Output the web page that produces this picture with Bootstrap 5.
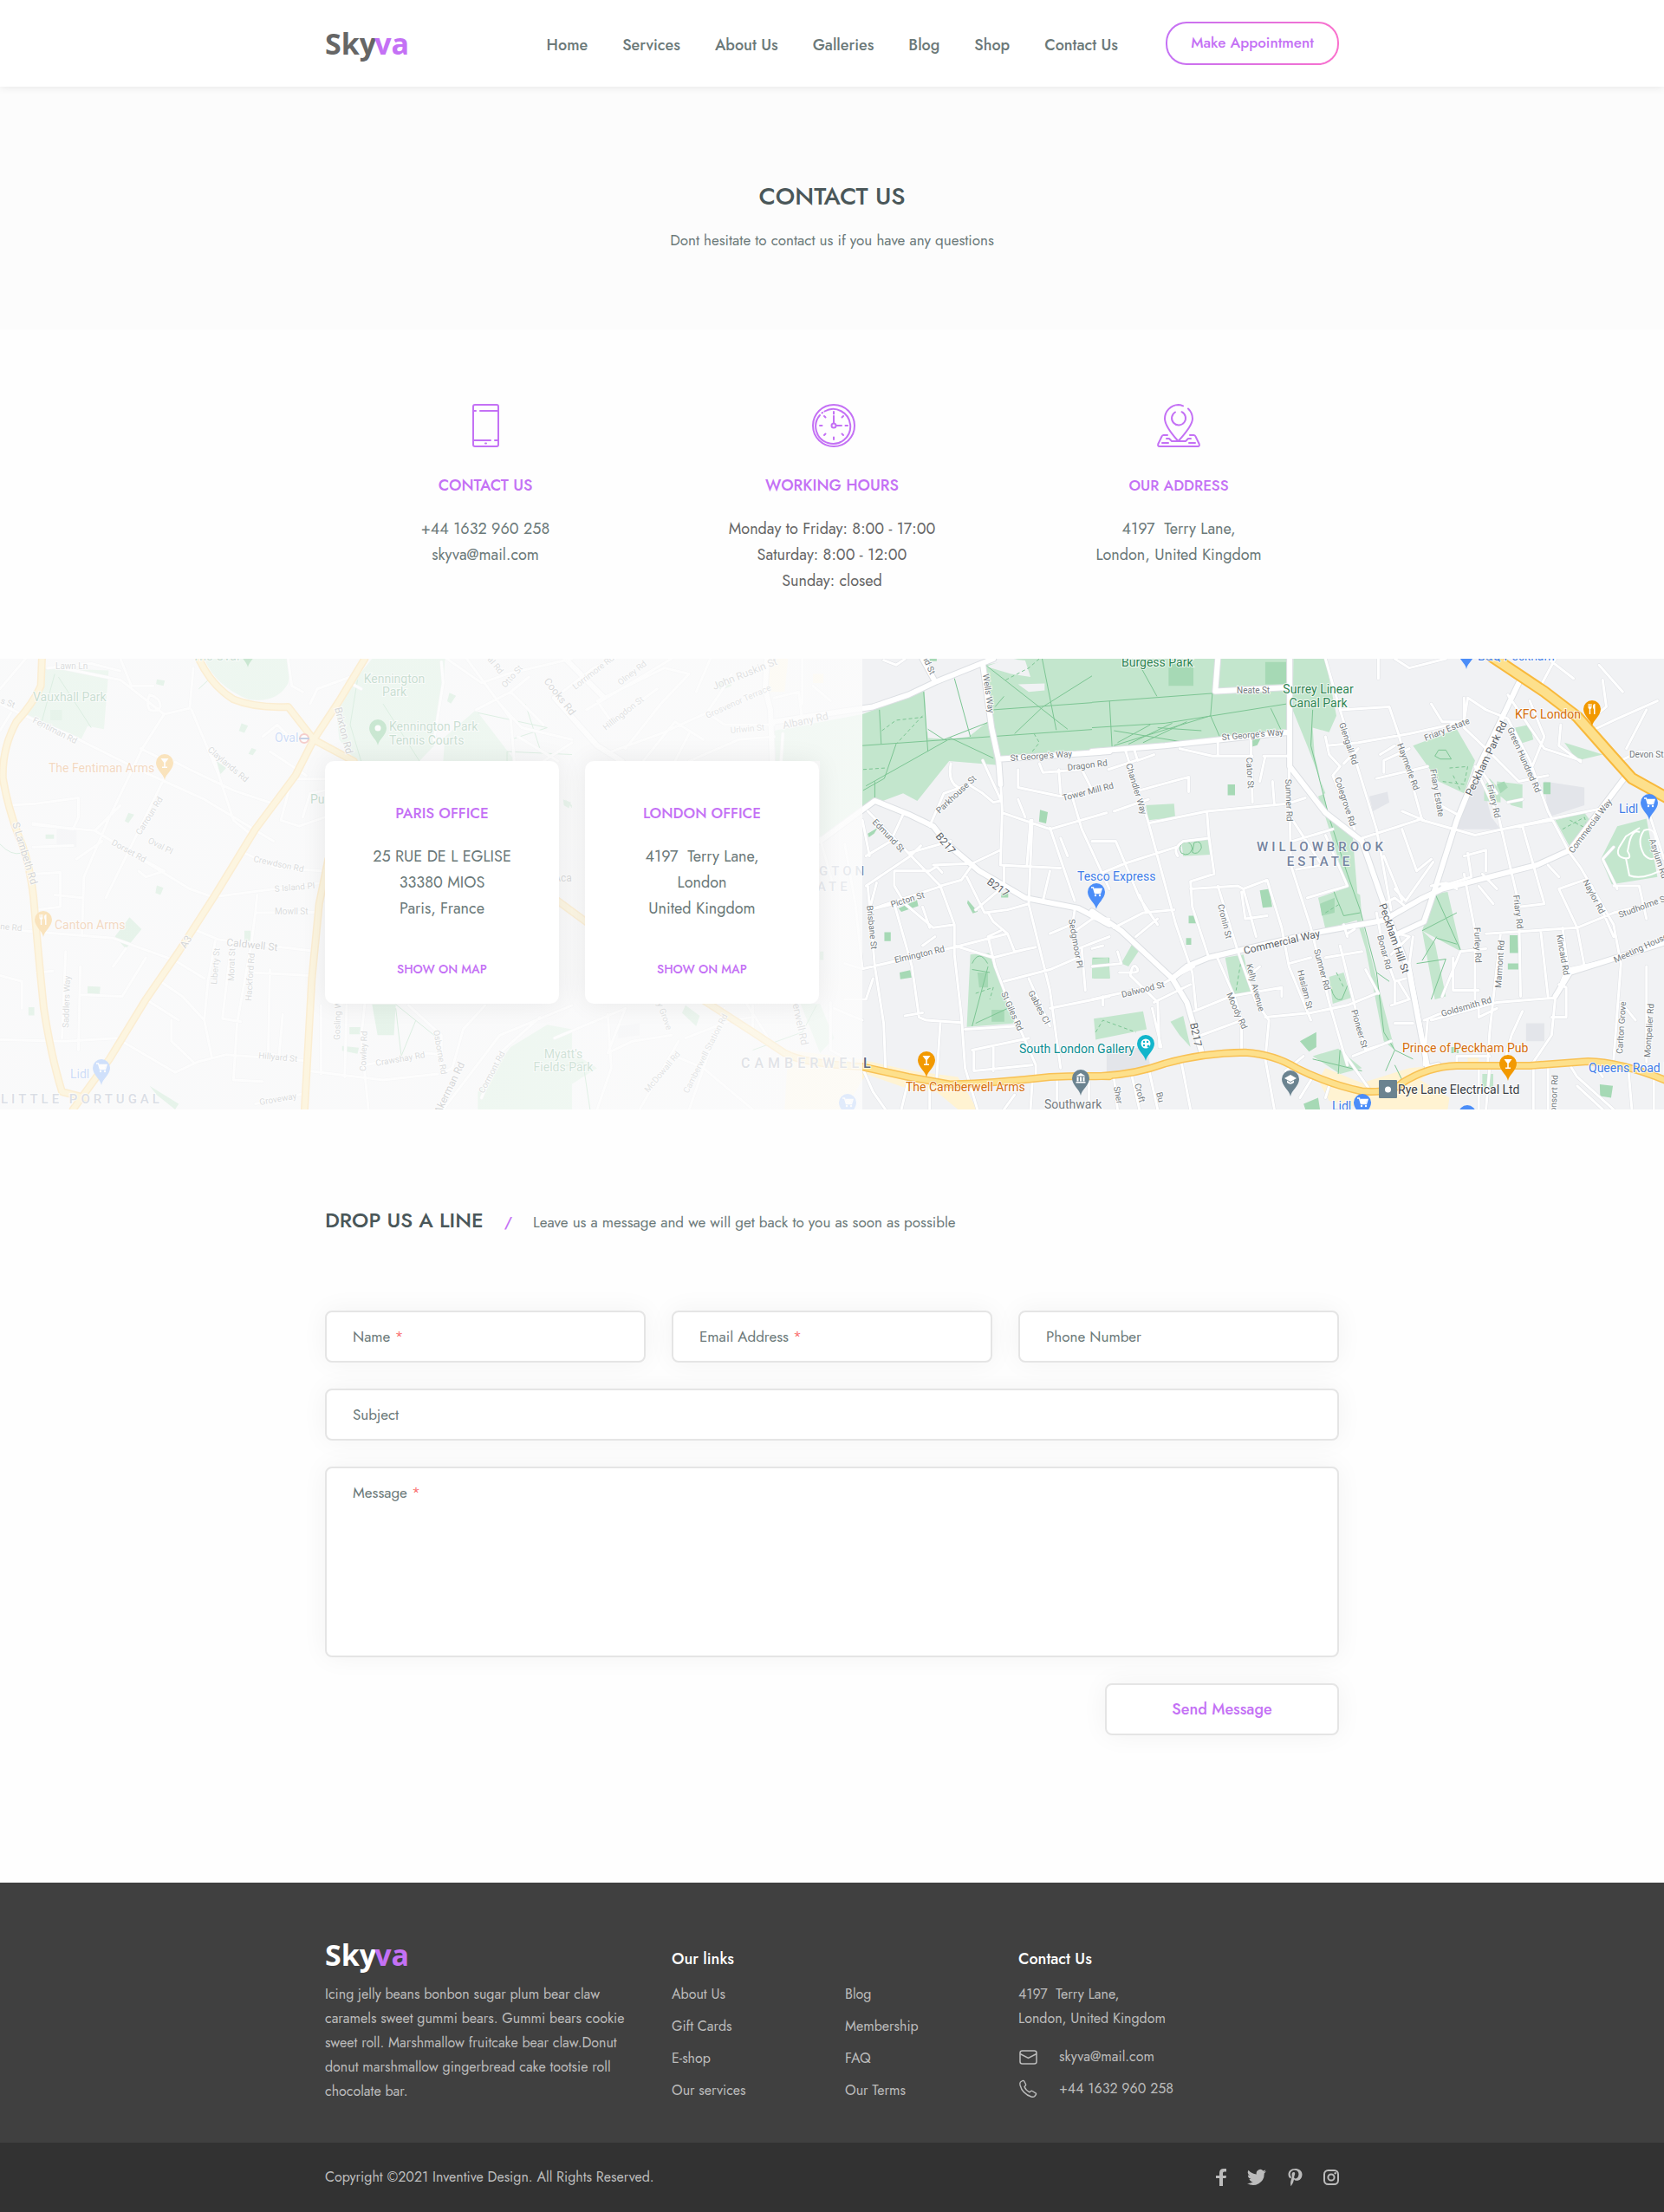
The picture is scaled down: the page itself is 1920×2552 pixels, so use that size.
<!DOCTYPE html>
<html lang="en">
<head>
<meta charset="utf-8">
<meta name="viewport" content="width=device-width, initial-scale=1">
<title>Skyva – Contact Us</title>
<link href="https://cdn.jsdelivr.net/npm/bootstrap@5.3.0/dist/css/bootstrap.min.css" rel="stylesheet">
<style>
:root{--ink:#4a5759;--soft:#6b7979;--violet:#c471f5;--pink:#fa71cd}
body{font-family:Jost,Lato,"Open Sans",sans-serif;font-size:17px;line-height:30px;color:var(--soft);background:#fefefe}
a{text-decoration:none}
.page-wrap{max-width:1200px;padding-left:15px;padding-right:15px}
.row{--bs-gutter-x:30px}
.site-head{min-height:100px;box-shadow:0 0 10px rgba(0,0,0,.1);position:relative;z-index:2}
.brand{font:700 34px/40px "Open Sans","Noto Sans",sans-serif;color:#666}
.brand span{color:var(--violet);margin-left:-2px}
.menu{gap:40px}
.menu .nav-link{color:var(--soft);font-size:18px;font-weight:500;line-height:24px;padding:4px 0 0}
.btn-appoint{width:200px;height:50px;margin-left:55px;border:2px solid transparent;border-radius:24px;color:var(--violet);font-size:17px;font-weight:500;background:linear-gradient(#fff,#fff) padding-box,linear-gradient(90deg,var(--violet),var(--pink)) border-box}
.btn-appoint:hover{color:var(--pink)}
.hero{background:#fcfcfc;padding:110px 0 88px}
.hero h1{font-size:28px;line-height:34px;font-weight:500;color:var(--ink);margin-bottom:18px}
.info{padding:86px 0 75px}
.info svg{display:block;margin:0 auto 29px}
.cap{color:var(--violet);font-size:18px;line-height:30px;font-weight:500;margin-bottom:20px}
.cap-sm{font-size:17px}
.facts{font-size:18px;line-height:30px;color:var(--soft)}
.facts a{color:inherit}
.hours{color:#666}
.map-zone{position:relative;padding:118px 0 122px;overflow:hidden;background:#f1f2f4}
.map-art{position:absolute;left:0;top:0;width:100%;height:100%}
.map-veil{position:absolute;left:0;top:0;bottom:0;width:51.8%;background:linear-gradient(90deg,rgba(252,252,252,.75) 50%,rgba(252,252,252,.85))}
.office{min-height:280px;padding:45px 15px 25px;border:0;border-radius:10px;background:#fff;box-shadow:0 0 30px rgba(0,0,0,.07);text-align:center}
.office .btn-map{color:var(--violet);font-size:14px;font-weight:500;line-height:30px;margin-top:auto}
.write{padding:110px 0 170px}
.write h2{font-size:24px;line-height:36px;font-weight:500;color:var(--ink);margin:0}
.write-head{margin-bottom:86px}
.slash{color:var(--violet);font-weight:500}
.field{position:relative}
.field label{position:absolute;left:32px;top:16px;pointer-events:none;line-height:28px}
.field label b{color:#fa7070;font-weight:400}
.field .form-control:not(:placeholder-shown)+label{display:none}
.field .form-control,.btn-send{min-height:60px;border:2px solid #e5e5e5;border-radius:8px;background:#fff;box-shadow:0 0 30px rgba(0,0,0,.05);padding:14px 30px;font-size:17px}
.field textarea.form-control{height:220px;resize:none}
.btn-send{color:var(--violet);width:270px;font-size:18px;font-weight:500}
.foot{background:#404040;color:#bcbcbc;padding:62px 0 37px;font-size:16px;line-height:28px}
.foot a{color:inherit}
.foot a.brand{color:#fff;line-height:42px;display:block;margin-bottom:11px}
.foot h3{font-size:18px;line-height:28px;font-weight:500;color:#fff;margin:12px 0 13px}
.foot li{margin-bottom:9px}
.foot-bar{background:#323232;color:#bcbcbc;padding:26px 0;font-size:16px;line-height:28px}
.foot-bar svg{display:block;fill:#bcbcbc}
/* map drawing */
.tile path,.tile rect{vector-effect:non-scaling-stroke}
.ways{fill:none;stroke-linejoin:round;stroke-linecap:round}
.park{fill:#c3e6cd}.lawn{fill:#a6d9b5}.block{fill:#e3e5ea}.shop{fill:#fff3d2}
.trail{fill:none;stroke:#7cc593;stroke-width:1}
.dash{stroke-dasharray:4 3}
.lbl text{font-family:Roboto,sans-serif;font-size:10px;fill:#757b80;paint-order:stroke;stroke:rgba(255,255,255,.75);stroke-width:2px}
.lbl .poi{font-size:14px}
.lbl .main{font-size:12px;fill:#5d6368}
.green{fill:#2f8552!important}.orange{fill:#d56e0c!important}.blue{fill:#3f7de8!important}.teal{fill:#0c8f93!important}.dark{fill:#3a3f44!important}
.lbl .area{font-size:15px;font-weight:500;letter-spacing:4px;fill:#7584a0}
.lbl .town{font-size:16px;letter-spacing:5px;fill:#5b6880}
</style>
<script src="https://cdn.jsdelivr.net/npm/bootstrap@5.3.0/dist/js/bootstrap.bundle.min.js"></script>
</head>
<body>
<header class="site-head bg-white d-flex align-items-center">
  <div class="container-fluid page-wrap d-flex flex-wrap align-items-center">
    <a class="brand" href="#">Sky<span>va</span></a>
    <nav class="nav menu ms-auto" aria-label="Main">
      <a class="nav-link" href="#">Home</a><a class="nav-link" href="#">Services</a><a class="nav-link" href="#">About Us</a><a class="nav-link" href="#">Galleries</a><a class="nav-link" href="#">Blog</a><a class="nav-link" href="#">Shop</a><a class="nav-link" href="#">Contact Us</a>
    </nav>
    <button type="button" class="btn btn-appoint">Make Appointment</button>
  </div>
</header>

<main>
<section class="hero text-center">
  <h1>CONTACT US</h1>
  <p class="m-0">Dont hesitate to contact us if you have any questions</p>
</section>

<section class="info">
  <div class="container-fluid page-wrap">
    <div class="row text-center">
      <div class="col-md-4">
        <svg width="50" height="50" viewBox="0 0 50 50" fill="none" stroke="#c471f5" stroke-width="2" stroke-linecap="round" aria-hidden="true"><rect x="11" y="1" width="29" height="48" rx="2"/><path d="M12 8h2M19 8h20M12 42h19M36 42h3"/><path d="M25 45.500h1"/></svg>
        <h2 class="cap">CONTACT US</h2>
        <div class="facts"><a href="#">+44 1632 960 258</a><br><a href="#">skyva@mail.com</a></div>
      </div>
      <div class="col-md-4">
        <svg width="54" height="50" viewBox="-2 0 54 50" fill="none" stroke="#c471f5" stroke-width="2" stroke-linecap="round" aria-hidden="true"><g transform="translate(2 0)"><circle cx="25" cy="25" r="24"/><path d="M14.500 8.500A20 20 0 1 1 9 13M11.500 10.500l.5-.5"/><circle cx="25" cy="25" r="2.500"/><path d="M25 22V14M28 25h6M25 9v2.500M25 38.500V41M9 25h2.500M38.500 25H41M14 14l1.500 1.500M36 14l-1.500 1.500M14 36l1.500-1.500M36 36l-1.500-1.500"/></g></svg>
        <h2 class="cap">WORKING HOURS</h2>
        <div class="facts hours">Monday to Friday: 8:00 - 17:00<br>Saturday: 8:00 - 12:00<br>Sunday: closed</div>
      </div>
      <div class="col-md-4">
        <svg width="50" height="50" viewBox="0 0 50 50" fill="none" stroke="#c471f5" stroke-width="2" stroke-linecap="round" stroke-linejoin="round" aria-hidden="true"><path d="M30 2.300Q27 1 24.500 1A16 16 0 0 0 9 17C9 25 20 38 24.500 43 30 37 41 25 41 17A16 16 0 0 0 36 5.500"/><path d="M28.500 9.200A8 8 0 1 1 21 9.500"/><path d="M12 36H7.500Q6 36 5.300 38L1.400 46Q.5 49 3 49H47Q49.500 49 48.600 46L44.700 38Q44 36 42.500 36H38M11 40h3l3 3M6 45h7M39 40h-3l-3 3M44 45h-7M18 43h14"/></svg>
        <h2 class="cap cap-sm">OUR ADDRESS</h2>
        <div class="facts">4197 &nbsp;Terry Lane,<br>London, United Kingdom</div>
      </div>
    </div>
  </div>
</section>

<section class="map-zone">
<svg class="map-art" viewBox="0 0 1920 520" preserveAspectRatio="xMidYMid slice" role="img" aria-label="Street map of south London">
<defs>
<path id="pin" d="M0 0C-1-7-10-12-10-20A10 10 0 1 1 10-20C10-12 1-7 0 0Z"/>
<g id="cart"><path d="M-6-25h2.500l2 6.500h6l1.500-5h-8" fill="none" stroke="#fff" stroke-width="1.500"/><path d="M-3-23.500h8.500l-1.500 4.500h-6z" fill="#fff"/><circle cx="-1" cy="-16" r="1.200" fill="#fff"/><circle cx="4" cy="-16" r="1.200" fill="#fff"/></g>
<path id="glass" d="M-4.500-25h9L.8-20v4.500h2.200v1.500h-6v-1.500h2.200V-20z" fill="#fff"/>
<path id="fork" d="M-4.500-26v4q0 1.500 1.300 2v6h1.400v-6q1.300-.5 1.300-2v-4h-1v3.500h-.6V-26h-.8v3.500h-.6V-26zM2-14v-5.500q-1-1-1-3.500 0-3 2.500-3v12z" fill="#fff"/>
<g id="lanes">
 <g class="tile" transform="matrix(.4209 0 0 .3444 0 -10)">
  <path d="M0 180L60 215L200 290L380 400L560 500L750 640M150 55L330 100L450 215L520 195L530 60M130 60L250 45L330 70M525 200L600 420L640 570L690 620M600 420L580 330M450 215L390 330L300 560L230 760L225 950M385 330L470 380L290 830M480 375L520 400L640 470L750 515M810 432H890M750 515L700 600M30 520L95 515L215 495V560L200 600L90 580M90 585L260 605L360 680L520 800L590 830M260 605L330 520M280 640L210 700M360 680L450 740L400 760L380 740M150 820L225 830M90 660L200 655M95 750L165 745V860L100 870M60 940L310 965L480 1040L560 1100M345 1000L310 1060M540 940L600 970L870 1010M670 680L760 730L880 740M595 825L880 780M705 820L700 880L860 878M700 880L690 975M590 975L570 1110L560 1240L580 1360M635 975L610 1230M690 975L650 1250L640 1440L720 1445M610 1235L660 1245M560 1240L500 1160L440 1110M400 1170L490 1240M100 1080L145 1075M180 1010L170 1300M220 1060L215 1340M220 1155L335 1160L400 1030M0 1305L180 1310L320 1300L480 1415L540 1380L620 1355L830 1375M470 1240V1310L530 1380M740 1070L735 1350L765 1360L775 1220M850 1090L690 1080M845 1410L1050 1440L1200 1420M880 1190V1420M950 1190L945 1430M1000 1185L990 1300L1010 1539M1120 1190L1210 1290V1420L1240 1400L1270 1270L1330 1190M1000 1390L1170 1350L1210 1355M0 1090L60 1110V1200M700 1520L835 1485M1215 1539L1370 1290L1568 1190M1320 1500L1370 1350L1480 1230M1210 40L1215 110L1190 300M1225 29L1320 110L1390 80L1568 29M1305 200L1400 140L1450 90M1400 140L1490 250M1370 180L1430 260L1568 300M1280 30L1400 230L1410 372M1420 290L1530 372M1490 372L1568 310M960 110L990 130M850 180L870 130L960 90M790 29L800 120L830 140M720 290L760 250L800 300M740 340L840 420M800 432L770 570L820 590L890 560M830 560L850 480L890 470M410 150Q400 180 410 200 430 210 440 190 440 160 410 150M330 29L360 120H420M0 130L70 29M0 270L30 210"/>
 </g>
 <g class="tile" transform="matrix(.4082 0 0 .3444 640 -10)">
  <path d="M0 160L110 60L170 29M120 170L310 60L380 80L300 180L220 300L200 330M120 170L160 240L290 130M90 200L330 29M160 340L300 280L430 210L470 140L500 80M400 140L440 29M380 372L520 300L620 290M430 210L480 250L620 250M340 372L380 280M620 160L690 140L700 240M730 120L780 170M640 372L645 280M700 29V180M250 372L340 240L420 300M885 540L1000 680L1090 790L1130 920V1020L1150 1230L1160 1400L1195 1539M1005 690L880 790M985 550L950 640L880 690M1035 655L1005 690M1000 680L1120 640M870 570L890 690M1180 715L1260 670M1090 790L1150 770L1180 720M890 870L1095 790M885 790L905 1060L930 1250L935 1400M910 780L890 870L960 850L1010 1060L1030 1230L1050 1240L1150 1248M870 1068L1130 995L1280 950M1060 740L960 740V790L990 850L1070 930L1130 920M1060 740L1080 725L1095 745M1165 760L1215 880L1280 870L1340 850M1225 880L1240 910L1280 950L1300 1010L1360 995M1260 940L1225 960L1245 1060L1290 1200L1360 1390L1360 1430M1130 990L1240 1030L1340 1000M1270 1110L1400 1070L1480 1030M1260 430L1265 540L1260 720L1340 725L1430 730M1350 570L1340 850L1350 900L1400 1140L1430 1400M1345 570L1335 720M1265 545L1400 600L1560 545M1400 595L1470 840M1370 380L1380 410L1490 400L1520 470M1310 400V460L1430 490L1460 480L1490 600L1568 800M1425 400L1430 480M1270 720V790L1190 870M1400 740L1380 840M1180 715L1070 720M1400 1200L1568 1160M1340 1100L1400 1260M1090 1250L1080 1430M1160 1270L1300 1260M1180 1340L1340 1300M1185 1340V1410L1350 1390M1240 1330V1410M1210 370L1260 500M1120 380Q1110 440 1140 460M1060 590L1100 480L1170 450L1210 480L1240 510L1260 505M1310 500L1330 560M1430 630L1450 690M1470 870L1460 950L1520 900H1568M1400 950L1460 920M1490 1000L1500 1140M1480 1000L1568 960M990 1225L1040 1215M900 1100L880 1170H820M820 1050L870 1068M790 1200L870 1240M820 650L850 850L870 1068M750 630L790 800M200 1200L150 1350L220 1310L330 1290M150 1220L160 1400L120 1539M0 1300L200 1200M560 1190V1280M480 1200L380 1539M370 1300L500 1240L560 1230M350 1310L240 1539M340 1360L420 1400L560 1539M540 1180L620 1330L700 1370M870 1400L900 1480L935 1539M1000 1440L980 1539M1060 1460V1539M1300 1490L1270 1539M1350 1450L1345 1539M1040 860L1060 930M1040 990L1075 960M1420 1430V1539M1510 1430V1539M930 34L965 50 990 30M780 1180V1340L860 1390"/>
 </g>
 <g class="tile" transform="matrix(.4209 0 0 .3444 1260 -10)">
  <path d="M90 330L155 580L230 920L275 1080L285 1200M115 330L125 370L170 350M45 400L120 370M130 470L265 425V475M60 540L155 500M155 580L315 540L535 515L585 495M315 540L320 620L335 750L270 775L275 860L320 1030M230 660L90 715L0 760M235 690Q220 665 250 640L320 630M0 640L65 640L130 830L180 920M240 330L330 355H440M345 300V350M435 300L440 510M475 355L460 440M470 355H540M495 440L500 520M540 395L545 720L600 930L650 1180L700 1390M545 560L630 720L560 735M640 620L700 790L590 830M550 640L660 600M640 29L680 200L780 600L820 870M680 200L815 190L840 280L905 570L1050 620L1240 570L1400 530M740 630L905 565M645 320L730 310L870 280L1020 240M640 290L650 350L680 390L660 420L720 600M690 380L730 330M790 350L830 320M780 430L920 390M800 410V370L870 330M850 540L910 570M940 510L1000 550M830 29L870 60L970 29M785 29V95M930 180L960 240L1020 240L1030 160L1080 200L1140 230L1200 370L1250 540L1310 680L1340 730L1430 920L1450 1050L1430 1370M1020 160V260L1080 330L1170 440L1250 420M1140 150L1240 330L1340 370M1200 170L1240 290L1200 410M1230 120L1270 29M1285 250L1280 320L1340 375M1400 100L1410 190L1350 250M1390 50L1455 140M1370 270L1440 230L1550 170M1465 330L1520 200M1250 29L1320 95M1450 370L1500 340L1568 350M1050 390L1115 560L1170 850L1175 1160M1060 390L1110 480M1180 590L1240 850L1170 860M1125 600L1260 570M1140 510L1180 500M850 600L890 740L930 700M935 710L860 840L830 800M800 690L850 840M1020 750L1050 940V1180M1030 680L1040 760L960 790M1020 690L1080 670V740M1070 750L1110 800M1060 790L1100 850M1080 950L1330 930L1430 880L1568 840M1120 950L1090 1280L1085 1380M930 1240L1110 1180L1270 1165L1300 1070L1450 1030M1270 1165L1260 1290L1210 1380M1230 940L1250 1160M1330 930L1350 1060M1290 930L1305 1070M910 1240L950 1220L1080 1180M1110 1200L1060 1230V1180M960 1160L1010 1010L1080 1000M990 1030V1140H1060M910 1390L920 1240M880 960L870 1050L900 1250L920 1400M1180 1210L1150 1290L1130 1380M1280 800L1350 770L1370 790L1430 960M1280 800L1330 930M1250 720L1280 760M1430 790L1500 790L1520 900M1430 660L1400 700L1440 800M1520 520L1568 700M1520 1060V1380M1450 1180L1490 1240M1280 1120L1300 1130V1230H1260M270 800L400 790L415 800L480 770L520 930L540 1060L600 1240M410 810L420 900L480 890M345 790L400 1010L450 1180L485 1240L475 1370M415 800L450 960M340 1020L390 1160L410 1240V1340M280 1210L380 1160L520 1130V1160M300 1290L410 1240M475 1230L600 1215L700 1190L780 1150M460 1060L430 1090M540 1050L600 1030M640 1030L740 1010M680 990L750 1340L800 1320M750 1070L785 1150M780 880L800 1010L830 1110L860 1100M830 1110V1180M715 1360L820 1310M690 1350L760 1470M690 920L700 960M700 950L720 935M0 1170L190 1120L280 1060M170 1180L270 1120M30 1160V1190M0 1060L80 1050L70 1010M75 1080H110Q135 1080 120 1060 110 1050 105 1090L180 1180L185 1330M165 1200L190 1330M150 880L130 820M60 930L140 880L225 870M180 900L120 960M0 1000L30 990M245 1380L270 1539M155 1400L180 1539M110 1430L130 1539M60 1430L70 1539M475 1370L500 1539M530 1410L580 1360M600 1440L570 1500M650 1460L640 1500M1000 1390V1360H1090M1060 1400V1539M1090 1400L1080 1539M1210 1400V1539M1250 1400V1539M1310 1390L1330 1430L1430 1539M1380 1390L1400 1430M1330 1460L1400 1539M1470 1400L1480 1539M1540 1430V1539M830 1250H880M820 1020L870 960L840 950M930 790L970 780L1000 800M800 850L830 830L860 860M820 1190L870 1170L840 1110"/>
 </g>
</g>
<g id="avenues">
 <g class="tile" transform="matrix(.4082 0 0 .3444 640 -10)">
  <path d="M600 29L595 130L610 200L615 372M620 240L760 215L900 190L1000 150L1080 105L1240 29M1040 29L1075 105M1210 45L1235 260L1255 370L1260 450M1255 365L1568 340M750 640L830 570L905 505L1000 550L1070 590L1110 650L1200 740L1330 830L1480 865L1568 920M0 160L120 320L190 372M30 29L140 160"/>
 </g>
 <g class="tile" transform="matrix(.4209 0 0 .3444 1260 -10)">
  <path d="M0 340L200 320L540 275M345 29L338 138L540 125M542 29V390L640 545L740 640L800 850L870 1080L920 1400L950 1390M0 875L80 940L220 1100L260 1180L300 1345M220 1100L260 1060L320 1030L600 950L800 905L900 835L960 800L1220 720L1310 670L1465 420M1170 110L1060 390L1000 570L935 820L910 910L840 950M1270 1160L1310 1080L1568 980"/>
 </g>
</g>
<g id="highways">
 <g class="tile" transform="matrix(.4209 0 0 .3444 0 -10)">
  <path d="M115 29L112 120Q90 180 45 240 5 330 8 430 20 520 50 620 80 700 92 830 105 1020 120 1200 140 1360 170 1480L235 1500"/>
  <path d="M1000 29L930 170L860 300L810 420L700 600L590 820L490 1010L400 1170L300 1370L200 1539"/>
  <path d="M545 29Q580 120 640 165 700 195 790 190L860 300L970 372M900 700L875 850L855 1100L835 1539"/>
 </g>
 <g class="tile" transform="matrix(.4082 0 0 .3444 640 -10)">
  <path d="M-60 780L100 920L430 1180L560 1280L650 1350Q700 1385 870 1396L1000 1430L1120 1455Q1250 1450 1400 1430 1480 1425 1568 1428"/>
 </g>
 <g class="tile" transform="matrix(.4209 0 0 .3444 1260 -10)">
  <path d="M-20 1428Q100 1430 200 1385 300 1350 420 1348 500 1355 560 1400 650 1455 740 1478 820 1485 850 1450 920 1395 1000 1392L1200 1392L1360 1378Q1450 1380 1580 1445"/>
 </g>
</g>
<path id="trunk" d="M1716-6L1782 38L1820 67L1858 110L1883 138L1930 164"/>
</defs>
<rect width="1920" height="520" fill="#f1f2f4"/>
<g class="tile" transform="matrix(.4209 0 0 .3444 0 -10)">
 <path class="park" d="M125 60L298 68L285 265L240 255L220 305L65 210L100 150ZM560 29Q590 120 680 165 760 180 790 110 800 60 790 29ZM1020 29H1220L1215 120 1190 320 1150 372H975L930 300 920 180ZM1305 200L1405 360V372H1215L1220 290ZM1568 1270L1500 1255 1400 1330 1310 1480V1539H1568Z"/>
 <path class="lawn" d="M430 98l22 4-4 18-20-6zM662 245l18 8-10 24-15-6zM690 328l13 6-10 18-12-4zM352 545l16 6-16 28-10-6zM125 618h23v14h-23zM430 788l18 8-8 24-14-6zM670 940h17v35h-17zM240 1126l35 2-2 26-33-4zM78 1196h16v28h-16zM958 1263h30v24h-30zM1232 143l18 10-14 26-10-8zM315 960L355 895 388 935 345 1000ZM580 360L620 395 605 415ZM1020 1187H1085L1080 1290H1035ZM410 1460L490 1520 480 1539 430 1490ZM938 1326l46 6-4 20-42-10zM138 200h32v35h-32zM1550 500l18 20v10z"/>
 <path class="block" d="M155 600H210V660H155Z"/>
 <path class="trail" d="M0 650Q30 690 60 680M1085 1187L1200 1300M1085 1200L1100 1360 1140 1240M1310 210L1500 260 1400 300M1440 180L1480 330M545 130L580 90M1390 372V340L1568 350M150 80L110 260M160 90L250 260M980 100L960 250 990 372M1050 180L1150 372"/>
</g>
<g class="tile" transform="matrix(.4082 0 0 .3444 640 -10)">
 <path class="shop" d="M600 29H660L650 140H600ZM730 80H760V110H730ZM660 1340L860 1370 1010 1410 1140 1430 1195 1539H1140L1080 1480 1000 1470 880 1420 820 1539H650Z"/>
 <path class="park" d="M620 270L870 215 1045 135 1055 295 1110 298 1170 290 1228 235 1218 50 1310 29H1568V335L1250 370 1248 385 1115 372 1025 505 985 480 905 515 800 600 750 640V372H625ZM1175 1020L1228 1015 1300 1250 1165 1262ZM695 1185H750L790 1300 750 1350ZM0 1310L120 1400 0 1490ZM1530 1240L1568 1230V1290L1530 1300Z"/>
 <path fill="#f1f2f4" d="M1220 55L1280 29 1330 35 1345 90 1290 80ZM1310 115L1385 112V135L1340 140ZM1130 95L1228 235 1170 290 1070 295 1050 270 1048 140Z"/>
 <path class="lawn" d="M1372 535l22 8-5 38-20-6zM455 110l40-20 5 30-30 15zM885 615l28-20-10 20-15 12zM972 865l52-28 4 20-48 20zM1168 838l28 38-14 6-16-34zM932 945h18v30h-18zM975 1080l30-8 4 25-32 6zM1520 1030h48v70h-45zM1195 1080h30v50h-25zM1235 1205h36v40h-36zM370 1190L410 1225 400 1260 360 1215ZM24 500L46 510 40 530 26 520ZM1262 815l20-4v18h-20zM1060 29h20v8h-20zM750 1010h10v28h-10z"/>
 <path class="block" d="M175 1260L240 1250V1290L180 1300Z"/>
 <path class="trail" d="M870 320L1568 262M918 200L923 315M1043 140L1055 340M965 315L932 430 872 470M1130 95L1175 290M1055 265L1100 300 1230 240M1120 295L880 455M1120 295L1240 362M1218 50L1450 265M1568 50L1380 190 1300 280M1240 200L1568 172M1378 29L1418 268M1270 155L1245 190M905 440V515M1180 1260L1225 1060M1180 1050Q1200 1000 1224 1050M1180 1070L1230 1080M1190 1250L1290 1195M740 1190L700 1280 560 1340M0 1400L80 1380 100 1539"/>
 <path class="trail dash" d="M925 270L965 235 1040 225M1040 220L965 315M872 400L935 395M1275 100L1340 60 1370 29M1355 280L1370 310 1350 340M1190 1150L1240 1130 1230 1170"/>
</g>
<g class="tile" transform="matrix(.4209 0 0 .3444 1260 -10)">
 <path class="shop" d="M640 1400L740 1450 870 1400 960 1390 900 1440 980 1500 975 1539H760L650 1510 620 1440ZM1030 1365H1060V1400H1030Z"/>
 <path class="block" d="M760 490L810 475 815 510 770 540ZM1060 400L1095 560 1120 600 1000 600ZM1240 440L1350 460V520L1250 560ZM40 1340L150 1330 160 1395 40 1420ZM1190 1250H1240V1310H1190Z"/>
 <path class="park" d="M0 29H345L338 140 542 130V272L0 335ZM345 29H542V125L340 135ZM552 29H640L670 220 650 275 605 260 610 350 650 560 715 630 730 850 745 930 790 1150 830 1340 800 1310 750 1000 640 560 620 490 640 480 590 320 550 200ZM880 320L1000 265 1050 370 1020 480 950 440ZM1295 310L1400 350 1330 370ZM1160 260L1200 250 1210 300 1170 315ZM1110 440L1180 450V530L1150 520 1110 480ZM1090 430L1120 470V510L1075 505V460ZM1270 570L1350 545 1365 570 1310 660ZM1440 590L1520 565 1550 760 1425 785 1395 700ZM148 520L225 515 228 560 155 570ZM245 640L322 632 325 685 250 690ZM620 830L700 795 735 820 740 900 640 935ZM940 815L975 810 1012 1010 905 940ZM905 940L940 980 970 1160 940 1170ZM365 1030L415 1020 440 1145 385 1155ZM80 1050L110 985 130 1005 100 1060ZM0 1035L45 1030 50 1100H0ZM5 1235L140 1210 150 1270 10 1305ZM215 1245L250 1225 270 1330 240 1290ZM650 1095L690 1080 710 1165 660 1185ZM605 1360L675 1335 740 1400 680 1420ZM1070 1420H1100V1465H1070Z"/>
 <path class="lawn" d="M210 45H278V120H210ZM475 40H532V115H475ZM1237 443h20v40h-20zM372 450h20v36h-20zM460 805l26-5 8 60-26 3zM1145 955h24v60h-24zM1140 1050h35v20h-35zM570 1310l45-30v50l-20 15zM1392 1455l36 5-5 40-30-6zM265 890h20v25h-20zM258 965h14v22h-14zM435 300l28-6-10 25-18 6zM1110 450l20-10 10 20-20 20zM625 850l40-20v50l-35 10zM985 1330h20v20h-20zM580 1520l40-20 5 39h-40z"/>
 <path class="trail" d="M0 175L330 145 542 130M0 260L200 245 330 220 535 180M135 60L178 155M330 145L325 220 350 290M325 220L60 320M48 170L55 325M490 195L520 272M60 270L260 310M70 310L160 250M100 315L220 245M140 310L260 240M300 270L180 260M605 200L600 320 650 560 700 750 735 870M735 870L780 1080 800 1280 830 1340 805 1410M660 800L690 890 735 880M940 815L1012 1010M905 940L1000 880M945 960L905 1040M945 965L1000 985M890 1050L970 1035 930 1170M815 1110L780 1080M830 1340L880 1370M605 1370L740 1410M680 1340L675 1420M830 1390L850 1440M250 645q20-10 25 20-8 30-30 15-10-20 5-35zM280 645q20-10 20 18-10 25-25 15zM655 1130q10 50 30 40l15-45M940 355l10-20h20l15 30-30 0z"/>
 <path class="trail dash" d="M980 395L1030 390 1020 450 960 440M990 420L1010 470M1290 600L1350 560 1360 600 1310 570M410 1030L395 1140M10 1280L30 1240 120 1280M670 1080L690 1130M640 880L680 850"/>
</g>
<g class="ways"><use href="#lanes" stroke="#dfe1e5" stroke-width="4"/><use href="#avenues" stroke="#dcdfe3" stroke-width="8"/><use href="#lanes" stroke="#fff" stroke-width="3"/><use href="#avenues" stroke="#fff" stroke-width="6"/>
<use href="#highways" stroke="#f8c154" stroke-width="9"/><use href="#highways" stroke="#fde08c" stroke-width="6"/><use href="#trunk" stroke="#f8b93c" stroke-width="14"/><use href="#trunk" stroke="#fde08c" stroke-width="10"/></g>
<path d="M1892 200Q1884 196 1880 212L1878 222Q1884 232 1874 230 1864 228 1868 218L1876 205 1892 195M1876 230L1880 250Q1896 256 1920 242M1897 198Q1908 194 1910 206L1914 226Q1906 236 1897 226Q1888 210 1897 198Z" fill="none" stroke="#fff" stroke-width="2"/>
<g class="lbl">
 <text class="poi green" x="38" y="49">Vauxhall Park</text><text x="64" y="12">Lawn Ln</text><text transform="translate(37 73) rotate(27)">Fentiman Rd</text><text class="poi orange" x="56" y="131">The Fentiman Arms</text><text class="poi blue" x="317" y="96">Oval</text><text class="poi green" x="222" y="2">The Oval</text>
 <g text-anchor="middle"><text class="poi green" x="455" y="28">Kennington</text><text class="poi green" x="455" y="43">Park</text><text class="poi green" x="650" y="461">Myatt's</text><text class="poi green" x="650" y="476">Fields Park</text></g>
 <text class="poi green" x="449" y="83">Kennington Park</text><text class="poi green" x="449" y="99">Tennis Courts</text>
 <text class="main" transform="translate(386 57) rotate(76)">Brixton Rd</text><text transform="translate(239 106) rotate(40)">Claylands Rd</text><text transform="translate(162 204) rotate(-58)">Carroun Rd</text><text transform="translate(128 214) rotate(29)">Dorset Rd</text><text transform="translate(170 212) rotate(27)">Oval Pl</text><text transform="translate(292 234) rotate(12)">Crewdson Rd</text><text transform="translate(317 269) rotate(-5)">S Island Pl</text><text x="317" y="295">Mowll St</text><text class="main" transform="translate(214 335) rotate(-58)">A3</text><text class="main" transform="translate(261 331) rotate(6)">Caldwell St</text><text transform="translate(250 376) rotate(-85)">Liberty St</text><text transform="translate(270 372) rotate(-88)">Morat St</text><text transform="translate(290 395) rotate(-86)">Hackford Rd</text><text class="main" transform="translate(14 190) rotate(73)">S Lambeth Rd</text><text class="poi orange" x="63" y="312">Canton Arms</text><text transform="translate(79 426) rotate(-88)">Saddlers Way</text><text class="poi blue" x="81" y="484">Lidl</text><text class="area" x="1" y="513">LITTLE PORTUGAL</text><text transform="translate(300 515) rotate(-10)">Groveway</text><text transform="translate(298 461) rotate(5)">Hillyard St</text><text class="main" transform="translate(627 26) rotate(52)">Cooks Rd</text><text transform="translate(583 34) rotate(-48)">Otto St</text><text transform="translate(392 440) rotate(-88)">Gosling Way</text><text transform="translate(422 476) rotate(-88)">Cowley Rd</text><text transform="translate(434 470) rotate(-10)">Crawshay Rd</text><text class="main" transform="translate(508 526) rotate(-64)">Akerman Rd</text><text transform="translate(558 502) rotate(-62)">Cormont Rd</text><text transform="translate(500 429) rotate(80)">Osborne Rd</text><text class="poi green" x="358" y="167">Punch</text><text transform="translate(562 1) rotate(50)">al Rd</text><text transform="translate(0 51) rotate(20)">s St</text><text transform="translate(0 312) rotate(5)">ne Rd</text>
 <text class="main" transform="translate(824 36) rotate(-22)">John Ruskin St</text><text transform="translate(664 36) rotate(-38)">Lorrimore Rd</text><text transform="translate(716 31) rotate(-38)">Olney Rd</text><text transform="translate(816 69) rotate(-24)">Grosvenor Terrace</text><text transform="translate(699 83) rotate(-38)">Hillingdon St</text><text transform="translate(843 86) rotate(-5)">Urlwin St</text><text class="main" transform="translate(904 81) rotate(-12)">Albany Rd</text><text class="main" x="630" y="257">s Aca</text><text class="area" x="945" y="250">GTON</text><text class="area" x="943" y="268">ATE</text><text transform="translate(748 501) rotate(-50)">McDowall Rd</text><text transform="translate(794 502) rotate(-63)">Camberwell Station Rd</text><text transform="translate(758 398) rotate(70)">y Grove</text><text class="main" transform="translate(913 392) rotate(78)">berwell Rd</text><text class="area town" x="855" y="472">CAMBERWELL</text>
 <text transform="translate(1134 18) rotate(82)">Wells Way</text><text transform="translate(1064 -2) rotate(66)">nd St</text><text transform="translate(1166 118) rotate(-4)">St George's Way</text><text transform="translate(1232 129) rotate(-7)">Dragon Rd</text><text transform="translate(1227 164) rotate(-14)">Tower Mill Rd</text><text transform="translate(1084 179) rotate(-43)">Parkhouse St</text><text class="main" transform="translate(1079 205) rotate(50)">B217</text><text class="main" transform="translate(1138 259) rotate(36)">B217</text><text transform="translate(1006 189) rotate(46)">Edmund St</text><text transform="translate(1029 287) rotate(-17)">Picton St</text><text transform="translate(1033 351) rotate(-13)">Elmington Rd</text><text transform="translate(1000 285) rotate(84)">Brisbane St</text><text transform="translate(1233 301) rotate(80)">Sedgmoor Pl</text><text transform="translate(1155 386) rotate(66)">St Giles Rd</text><text transform="translate(1186 385) rotate(62)">Gables Cl</text>
 <text class="poi blue" x="1243" y="256">Tesco Express</text><text class="poi teal" x="1176" y="455">South London Gallery</text><text class="poi orange" x="1045" y="499">The Camberwell Arms</text><text class="poi" fill="#5a6a75" x="1205" y="519">Southwark</text><text class="poi green" x="1294" y="9">Burgess Park</text><text x="1427" y="40">Neate St</text>
 <g text-anchor="middle"><text class="poi green" x="1521" y="40">Surrey Linear</text><text class="poi green" x="1521" y="56">Canal Park</text><text class="area" x="1525" y="222">WILLOWBROOK</text><text class="area" x="1523" y="239">ESTATE</text></g>
 <text transform="translate(1410 94) rotate(-5)">St George's Way</text><text transform="translate(1438 114) rotate(87)">Cator St</text><text transform="translate(1299 122) rotate(73)">Chandler Way</text><text transform="translate(1483 139) rotate(88)">Sumner Rd</text><text transform="translate(1545 75) rotate(72)">Glengall Rd</text><text transform="translate(1540 138) rotate(72)">Colegrove Rd</text><text transform="translate(1612 99) rotate(70)">Haymerle Rd</text><text transform="translate(1645 95) rotate(-22)">Friary Estate</text><text transform="translate(1650 128) rotate(80)">Friary Estate</text><text class="main" transform="translate(1698 159) rotate(-64)">Peckham Park Rd</text><text transform="translate(1739 81) rotate(66)">Green Hundred Rd</text><text transform="translate(1716 146) rotate(77)">Friary Rd</text><text x="1880" y="114">Devon St</text><text class="poi orange" x="1748" y="69">KFC London</text><text class="poi blue" x="1705" y="2">B&amp;Q Peckham</text><text class="poi blue" x="1868" y="178">Lidl</text><text transform="translate(1815 225) rotate(-53)">Commercial Way</text><text transform="translate(1903 209) rotate(72)">Asylum Rd</text><text class="main" transform="translate(1436 341) rotate(-13)">Commercial Way</text><text transform="translate(1405 284) rotate(76)">Cronin St</text><text class="main" transform="translate(1591 284) rotate(71)">Peckham Hill St</text><text transform="translate(1589 320) rotate(75)">Bonar Rd</text><text transform="translate(1516 336) rotate(75)">Sumner Rd</text><text transform="translate(1438 353) rotate(75)">Kelly Avenue</text><text transform="translate(1497 360) rotate(76)">Haslam St</text><text transform="translate(1415 387) rotate(66)">Moody Rd</text><text transform="translate(1559 406) rotate(74)">Pioneer St</text><text transform="translate(1295 391) rotate(-14)">Dalwood St</text><text class="main" transform="translate(1373 421) rotate(78)">B217</text><text transform="translate(1664 413) rotate(-16)">Goldsmith Rd</text><text transform="translate(1701 310) rotate(88)">Furley Rd</text><text transform="translate(1732 380) rotate(-86)">Marmont Rd</text><text transform="translate(1746 273) rotate(83)">Friary Rd</text><text transform="translate(1796 319) rotate(80)">Kincaid Rd</text><text transform="translate(1826 257) rotate(62)">Naylor Rd</text><text transform="translate(1869 299) rotate(-20)">Studholme St</text><text transform="translate(1864 351) rotate(-25)">Meeting House Ln</text><text transform="translate(1872 456) rotate(-86)">Carlton Grove</text><text transform="translate(1904 460) rotate(-86)">Montpelier Rd</text><text transform="translate(1795 530) rotate(-87)">Consort Rd</text><text transform="translate(1285 494) rotate(80)">Sher</text><text transform="translate(1309 491) rotate(75)">Croft</text><text transform="translate(1334 501) rotate(75)">Bu</text><text class="poi orange" x="1618" y="454">Prince of Peckham Pub</text><text class="poi blue" x="1833" y="477">Queens Road P</text><text class="poi dark" x="1613" y="502">Rye Lane Electrical Ltd</text><text class="poi blue" x="1537" y="521">Lidl</text>
</g>
<circle cx="351" cy="92" r="5" fill="#fff" stroke="#e0443a" stroke-width="2"/><path d="M345 92h12" stroke="#2b4fa0" stroke-width="2"/>
<g transform="translate(190 140)"><use href="#pin" fill="#f29900"/><use href="#glass"/></g>
<g transform="translate(50 321)"><use href="#pin" fill="#f29900"/><use href="#fork"/></g>
<g transform="translate(117 492)"><use href="#pin" fill="#4b8df8"/><use href="#cart"/></g>
<g transform="translate(436 100)"><use href="#pin" fill="#34a853"/><circle cy="-20" r="3.500" fill="#fff"/></g>
<use href="#pin" fill="#34a853" x="286" y="10"/>
<g transform="translate(978 532)"><use href="#pin" fill="#4b8df8"/><use href="#cart"/></g>
<g transform="translate(1265 289)"><use href="#pin" fill="#4b8df8"/><use href="#cart"/></g>
<g transform="translate(1322 464)"><use href="#pin" fill="#12b5cb"/><circle cy="-20" r="5.500" fill="#fff"/><circle cx="-2" cy="-22" r="1.200" fill="#12b5cb"/><circle cx="2" cy="-22" r="1.200" fill="#12b5cb"/><circle cx="-2" cy="-18" r="1.200" fill="#12b5cb"/><circle cx="3" cy="-17" r="1.500" fill="#12b5cb"/></g>
<g transform="translate(1069 483)"><use href="#pin" fill="#f29900"/><use href="#glass"/></g>
<g transform="translate(1247 504)"><use href="#pin" fill="#6b8390"/><path d="M-5.500-22.500L0-26l5.500 3.500zM-4.500-21.500h2v5h-2zM-1-21.500h2v5h-2zM2.500-21.500h2v5h-2zM-5.500-16h11v1.500h-11z" fill="#fff"/></g>
<g transform="translate(1489 505)"><use href="#pin" fill="#6b8390"/><path d="M-7-21L0-25l7 4-7 4zM-4-18.500v2.500q4 3.500 8 0v-2.500L0-16z" fill="#fff"/></g>
<g transform="translate(1837 78)"><use href="#pin" fill="#f29900"/><use href="#fork"/></g>
<g transform="translate(1903 186)"><use href="#pin" fill="#4b8df8"/><use href="#cart"/></g>
<use href="#pin" fill="#4b8df8" x="1692" y="12"/>
<g transform="translate(1740 487)"><use href="#pin" fill="#f29900"/><use href="#glass"/></g>
<g transform="translate(1572 532)"><use href="#pin" fill="#4b8df8"/><use href="#cart"/></g>
<use href="#pin" fill="#4b8df8" x="1693" y="545"/>
<rect x="1591" y="486" width="21" height="21" rx="1" fill="#6b8390"/><circle cx="1601.500" cy="497" r="3.500" fill="#fff"/>
</svg>
<div class="map-veil"></div>
<div class="container-fluid page-wrap position-relative">
  <div class="row gy-4">
    <div class="col-md-4 col-lg-3">
      <div class="card office">
        <h2 class="cap cap-sm">PARIS OFFICE</h2>
        <div class="facts">25 RUE DE L EGLISE<br>33380 MIOS<br>Paris, France</div>
        <a class="btn-map" href="#">SHOW ON MAP</a>
      </div>
    </div>
    <div class="col-md-4 col-lg-3">
      <div class="card office">
        <h2 class="cap cap-sm">LONDON OFFICE</h2>
        <div class="facts">4197 &nbsp;Terry Lane,<br>London<br>United Kingdom</div>
        <a class="btn-map" href="#">SHOW ON MAP</a>
      </div>
    </div>
  </div>
</div>
</section>

<section class="write">
  <div class="container-fluid page-wrap">
    <div class="write-head d-flex flex-wrap align-items-baseline gap-4">
      <h2>DROP US A LINE</h2><span class="slash">/</span><span>Leave us a message and we will get back to you as soon as possible</span>
    </div>
    <form>
      <div class="row" style="--bs-gutter-y:30px">
        <div class="col-md-4"><div class="field"><input class="form-control" id="name" type="text" placeholder=" "><label for="name">Name <b>*</b></label></div></div>
        <div class="col-md-4"><div class="field"><input class="form-control" id="email" type="email" placeholder=" "><label for="email">Email Address <b>*</b></label></div></div>
        <div class="col-md-4"><div class="field"><input class="form-control" id="phone" type="tel" placeholder=" "><label for="phone">Phone Number</label></div></div>
        <div class="col-12"><div class="field"><input class="form-control" id="subject" type="text" placeholder=" "><label for="subject">Subject</label></div></div>
        <div class="col-12"><div class="field"><textarea class="form-control" id="message" placeholder=" "></textarea><label for="message">Message <b>*</b></label></div></div>
        <div class="col-12 d-flex justify-content-end"><button type="submit" class="btn btn-send">Send Message</button></div>
      </div>
    </form>
  </div>
</section>
</main>

<footer>
<div class="foot">
  <div class="container-fluid page-wrap">
    <div class="row">
      <div class="col-md-4">
        <a class="brand" href="#">Sky<span>va</span></a>
        <p class="m-0">Icing jelly beans bonbon sugar plum bear claw caramels sweet gummi bears. Gummi bears cookie sweet roll. Marshmallow fruitcake bear claw.Donut donut marshmallow gingerbread cake tootsie roll chocolate bar.</p>
      </div>
      <div class="col-md-4">
        <h3>Our links</h3>
        <div class="row">
          <ul class="col-6 list-unstyled m-0"><li><a href="#">About Us</a></li><li><a href="#">Gift Cards</a></li><li><a href="#">E-shop</a></li><li><a href="#">Our services</a></li></ul>
          <ul class="col-6 list-unstyled m-0"><li><a href="#">Blog</a></li><li><a href="#">Membership</a></li><li><a href="#">FAQ</a></li><li><a href="#">Our Terms</a></li></ul>
        </div>
      </div>
      <div class="col-md-4">
        <h3>Contact Us</h3>
        <address class="mb-3">4197 &nbsp;Terry Lane,<br>London, United Kingdom</address>
        <ul class="list-unstyled m-0">
          <li class="d-flex align-items-center gap-4"><svg width="23" height="24" viewBox="0 0 23 24" fill="none" stroke="#bcbcbc" stroke-width="1.500" aria-hidden="true"><rect x="2" y="5" width="19" height="15" rx="2.500"/><path d="M2 8.500l9.500 5 9.500-5"/></svg><a href="#">skyva@mail.com</a></li>
          <li class="d-flex align-items-center gap-4"><svg width="23" height="24" viewBox="0 0 23 24" fill="none" stroke="#bcbcbc" stroke-width="1.400" stroke-linejoin="round" aria-hidden="true"><path d="M2.500 4L5 2.500Q6.200 2 6.800 3.200L8.500 6.500Q9 7.500 8.200 8.200L7 9.500Q8.500 13.500 13 15.800L14.500 14.500Q15.300 14 16.200 14.500L20 16.800Q21 17.500 20.300 18.500L18.800 20.500Q17.500 21.700 15 21 4.500 17.500 2 7.500 1.500 5 2.500 4Z"/></svg><a href="#">+44 1632 960 258</a></li>
        </ul>
      </div>
    </div>
  </div>
</div>
<div class="foot-bar">
  <div class="container-fluid page-wrap d-flex flex-wrap align-items-center">
    <span>Copyright ©2021 Inventive Design. All Rights Reserved.</span>
    <div class="d-flex align-items-center gap-4 ms-auto">
      <a href="#" aria-label="Facebook"><svg width="12" height="20" viewBox="0 0 12 20"><path d="M4 20V11H0V8H4V5Q4 0 9 0h3v3.500H9.500Q8 3.500 8 5V8h4l-.5 3H8v9z"/></svg></a>
      <a href="#" aria-label="Twitter"><svg width="22" height="20" viewBox="0 0 24 20"><path d="M24 2.400a10 10 0 0 1-2.800.8A5 5 0 0 0 23.300.500a10 10 0 0 1-3.100 1.200 4.900 4.900 0 0 0-8.400 4.500A14 14 0 0 1 1.700 1.100a4.900 4.900 0 0 0 1.500 6.600A5 5 0 0 1 1 7.100a4.900 4.900 0 0 0 3.900 4.900 5 5 0 0 1-2.200.1 4.900 4.900 0 0 0 4.600 3.400A10 10 0 0 1 0 17.500 14 14 0 0 0 21.500 5 10 10 0 0 0 24 2.400z"/></svg></a>
      <a href="#" aria-label="Pinterest"><svg width="18" height="20" viewBox="0 0 18 20"><path d="M9.300 0C4.200 0 1.500 3.200 1.500 6.800c0 1.700.9 3.800 2.400 4.500.4.200.5.100.6-.2l.4-1.400-.1-.5C4.200 8.500 3.700 7.500 3.700 6.500c0-2.400 1.900-4.700 5.100-4.700 2.800 0 4.700 1.900 4.700 4.500 0 3-1.600 5.100-3.600 5.100-1.100 0-2-.9-1.700-2 .3-1.300 1-2.700 1-3.700 0-.9-.5-1.600-1.500-1.600C6.400 4.100 5.500 5.300 5.500 6.900c0 1 .4 1.700.4 1.700L4.300 14.800c-.4 1.600 0 4.200 0 4.800.1.400.4.300.6.100.3-.4 1.800-2.500 2.300-4.200l.9-3.300c.5.900 1.800 1.600 3.100 1.600 3.700 0 6.300-3.300 6.300-7.400C17.300 2.700 14 0 9.300 0z"/></svg></a>
      <a href="#" aria-label="Instagram"><svg width="18" height="18" viewBox="0 0 18 18"><g fill="none" stroke="#bcbcbc" stroke-width="2"><rect x="1" y="1" width="16" height="16" rx="4.500"/><circle cx="9" cy="9" r="3.600"/></g><circle cx="13.700" cy="4.300" r="1.200"/></svg></a>
    </div>
  </div>
</div>
</footer>
</body>
</html>
